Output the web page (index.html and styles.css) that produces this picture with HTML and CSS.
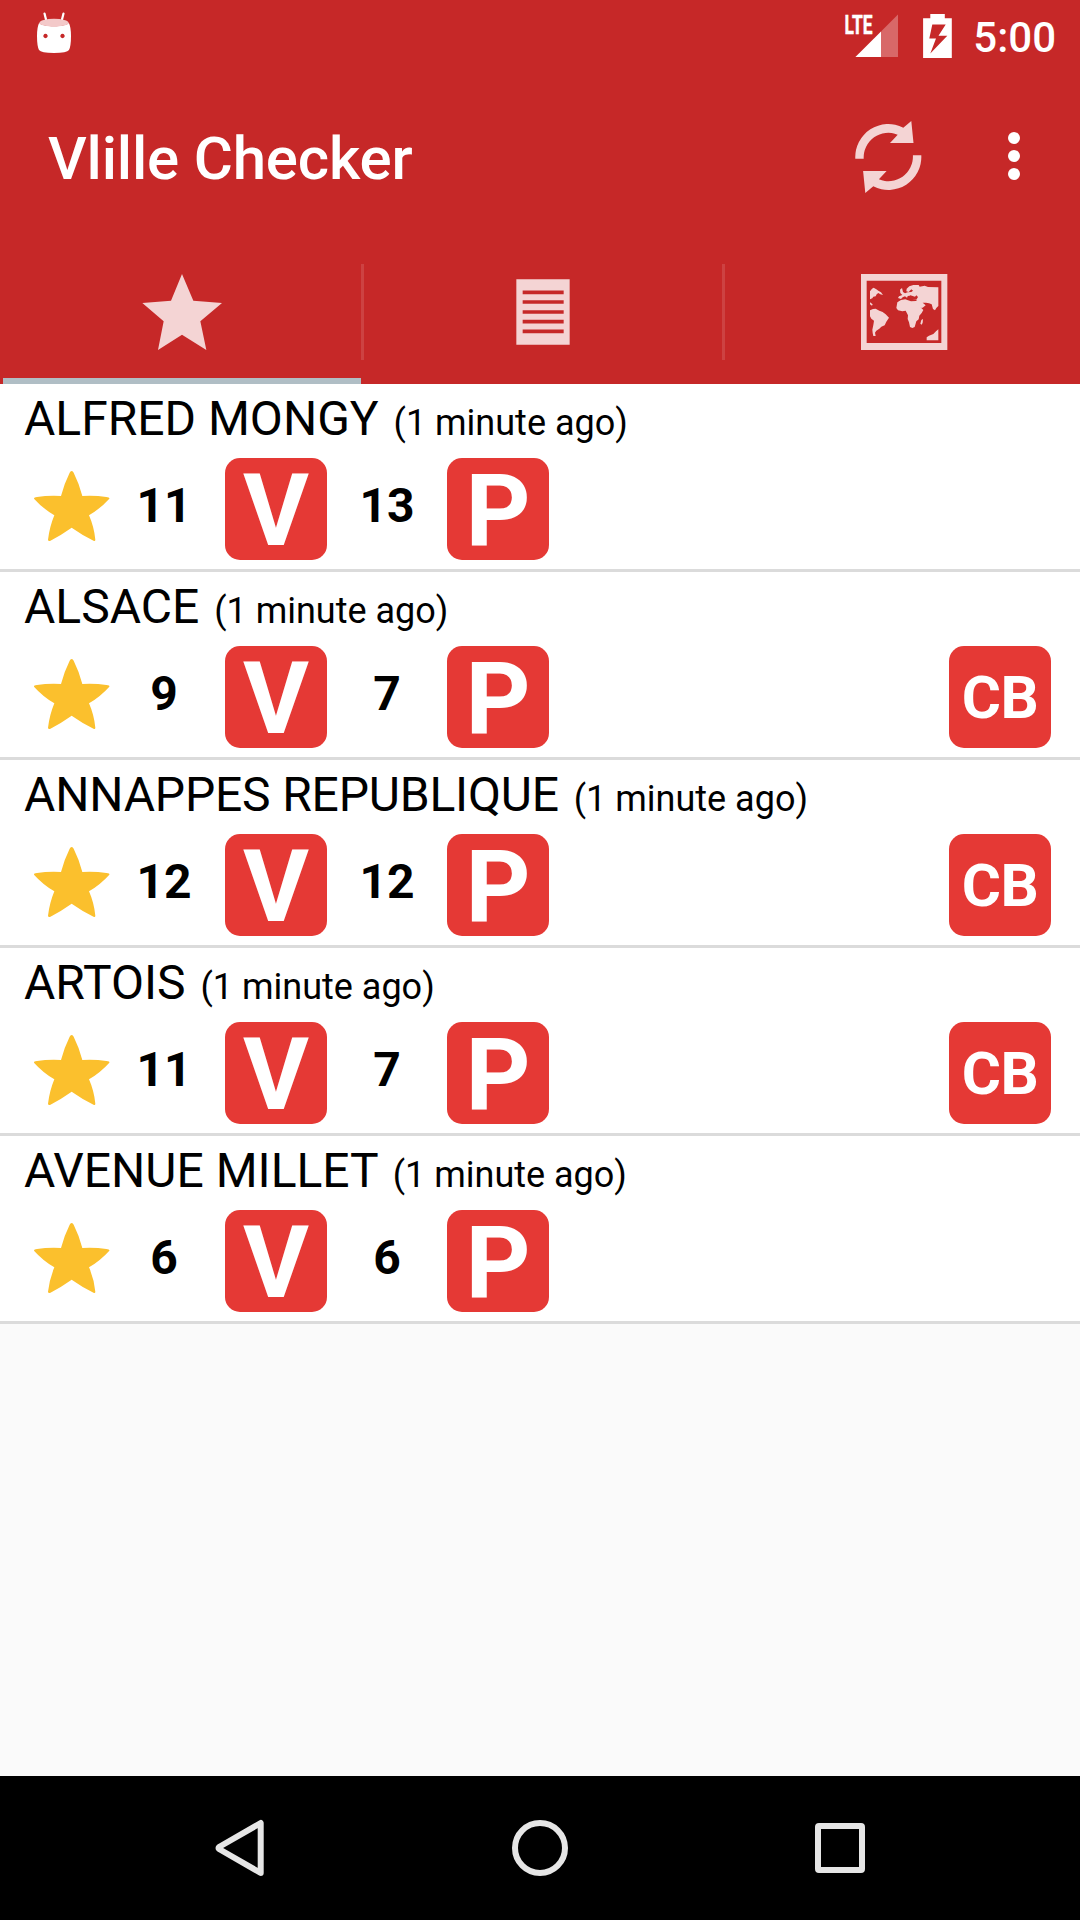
FILE: index.html
```html
<!DOCTYPE html>
<html lang="en">
<head>
<meta charset="utf-8">
<title>Vlille Checker</title>
<link rel="stylesheet" href="styles.css">
</head>
<body>
<svg class="defs" width="0" height="0">
  <symbol id="star" viewBox="99 270 234 216"><path d="M215 273Q219 273 221 278Q238 312 247 348Q286 346 319 351Q330 352 328 356Q302 385 267 406Q282 440 286 479Q286 484 282 483Q246 465 215 443Q184 465 150 483Q144 484 144 479Q149 440 163 406Q128 385 102 356Q101 352 111 351Q144 346 183 348Q192 312 209 278Q211 273 215 273Z"/></symbol>
</svg>
<header class="header">
  <div class="status">
    <svg class="robot" viewBox="36 12 36 42"><path d="M44.5 13.5l2 8M63.5 13.5l-2 8" stroke="#fff" stroke-width="2.2" stroke-linecap="round"/><path fill="#fff" fill-rule="evenodd" d="M39.3 22.5C40 27.500 68 27.500 68.700 22.500Q71 27 71 36Q71 46 69 50Q67 53 54 53Q41 53 39 50Q37 46 37 36Q37 27 39.300 22.500ZM45.500 33.800a2.200 2.200 0 1 0 .01 0ZM62.500 33.800a2.200 2.200 0 1 0 .01 0Z"/><ellipse cx="54" cy="22.700" rx="14.500" ry="3.900" fill="#f3c9c9"/></svg>
    <svg class="signal" viewBox="842 4 58 56"><path fill="#d86868" d="M881 31.500L898 14.500V57H881Z"/><path fill="#fff" d="M855.400 57L881 31.500V57Z"/><text x="844.500" y="33.500" textLength="28" lengthAdjust="spacingAndGlyphs">LTE</text></svg>
    <svg class="battery" viewBox="922 13 32 46"><path fill="#fff" fill-rule="evenodd" d="M930.300 14h14.500v4.300h7V58h-28.700V18.300h7.200ZM932.300 24.500L929.300 38.500H936L930.300 53.500L947.300 35.700H938.500L945.700 24.500Z"/></svg>
    <span class="clock">5:00</span>
  </div>
  <div class="toolbar">
    <h1 class="title">Vlille Checker</h1>
    <svg class="refresh" viewBox="854 119 70 76"><g id="arc"><path d="M855.300 158.700A33 33 0 0 1 903.300 127.700L911.300 121L913.500 143H890L897.700 134.700A24.600 24.600 0 0 0 863.700 158.700Z"/></g><use href="#arc" transform="rotate(180 888.300 157)"/></svg>
    <svg class="more" viewBox="0 0 12 48"><circle cx="6" cy="6" r="6"/><circle cx="6" cy="24" r="6"/><circle cx="6" cy="42" r="6"/></svg>
  </div>
  <nav class="tabs">
    <div class="tab active"><svg class="tab-star" viewBox="426 69 240 234"><path d="M546 72L580 152L666 159L601 214L619 300L546 254L474 300L491 214L427 159L513 152Z"/></svg></div>
    <div class="sep"></div>
    <div class="tab"><svg class="tab-list" viewBox="108 87 162 198"><path d="M109 88H269V284H109Z"/><path stroke="#c62828" stroke-width="11" d="M128 127H251M128 156H251M128 186H251M128 215H251M128 244H251"/></svg></div>
    <div class="sep"></div>
    <div class="tab"><svg class="tab-map" viewBox="60 69 264 234"><path fill-rule="evenodd" d="M63 72H322V300H63ZM80 92V279H304V92Z"/><path d="M90 124L96 116L101 113L109 118L115 122L123 127L129 135L121 133L115 129L110 133L107 139L100 140L97 145L90 148ZM90 157L98 163L96 167L90 163ZM90 181L99 177L107 176L118 182L128 186L137 193L147 203L139 215L134 226L124 230L118 236L109 242L105 248L107 258L100 258L98 249L97 239L100 225L102 212L94 206L90 199ZM172 157L183 150L196 148L204 151L213 154L228 153L233 160L241 171L250 180L245 189L238 197L236 208L229 214L224 231L217 234L210 231L207 217L203 207L204 196L197 182L187 184L174 181L169 174ZM177 139L187 135L181 129L180 119L186 114L189 126L195 130L203 127L214 126L219 122L214 118L206 126L199 124L200 116L208 109L220 105L236 105L239 110L254 107L264 111L295 112V168L289 174L285 181L279 177L275 163L267 160L258 158L248 158L257 166L248 173L240 174L233 167L228 160L230 151L219 148L213 140L204 137L201 143L195 139L188 142L183 147L174 144ZM244 210L249 207L248 218L245 224L241 221ZM295 238V271H260V262L267 257L280 252L288 244Z"/><path fill="#c62828" d="M202 141L211 136L225 140L229 136L234 141L229 149L216 149Z"/></svg></div>
  </nav>
</header>
<main class="list">
  <section class="row">
    <div class="name">ALFRED MONGY <small>(1 minute ago)</small></div>
    <div class="info"><svg class="star"><use href="#star"/></svg><b class="num">11</b><span class="tile">V</span><b class="num">13</b><span class="tile">P</span></div>
  </section>
  <section class="row">
    <div class="name">ALSACE <small>(1 minute ago)</small></div>
    <div class="info"><svg class="star"><use href="#star"/></svg><b class="num">9</b><span class="tile">V</span><b class="num">7</b><span class="tile">P</span><span class="tile card">CB</span></div>
  </section>
  <section class="row">
    <div class="name"><span class="long">ANNAPPES REPUBLIQUE</span> <small>(1 minute ago)</small></div>
    <div class="info"><svg class="star"><use href="#star"/></svg><b class="num">12</b><span class="tile">V</span><b class="num">12</b><span class="tile">P</span><span class="tile card">CB</span></div>
  </section>
  <section class="row">
    <div class="name">ARTOIS <small>(1 minute ago)</small></div>
    <div class="info"><svg class="star"><use href="#star"/></svg><b class="num">11</b><span class="tile">V</span><b class="num">7</b><span class="tile">P</span><span class="tile card">CB</span></div>
  </section>
  <section class="row">
    <div class="name">AVENUE MILLET <small>(1 minute ago)</small></div>
    <div class="info"><svg class="star"><use href="#star"/></svg><b class="num">6</b><span class="tile">V</span><b class="num">6</b><span class="tile">P</span></div>
  </section>
</main>
<footer class="navbar">
  <svg viewBox="0 0 60 60"><path d="M50.700 5V55L9 31Q8 30 9 29Z"/></svg>
  <svg viewBox="0 0 60 60"><circle cx="30" cy="30" r="25"/></svg>
  <svg viewBox="0 0 60 60"><rect x="8" y="8" width="44" height="44" rx="1"/></svg>
</footer>
</body>
</html>
```
FILE: styles.css
```css
* { box-sizing: border-box; }
body {
  margin: 0;
  width: 1080px;
  height: 1920px;
  display: flex;
  flex-direction: column;
  overflow: hidden;
  background: #fafafa;
  color: #000;
  font-family: Roboto, "Liberation Sans", sans-serif;
}
svg { display: block; flex: none; }
.defs { position: absolute; }

.header { background: #c62828; color: #fff; height: 384px; flex: none; }
.status { height: 72px; display: flex; align-items: flex-start; padding: 4px 24px 0 36px; }
.robot { width: 36px; height: 42px; fill: none; margin: 8px auto 0 0; }
.signal { width: 58px; height: 56px; }
.signal text { font: 700 26px Roboto, sans-serif; fill: #fff; stroke: #fff; stroke-width: .5; }
.battery { width: 32px; height: 46px; margin: 9px 19px 0 22px; }
.clock { font-size: 42px; font-weight: 500; line-height: 50px; margin-top: 9px; }

.toolbar { height: 168px; display: flex; align-items: center; padding: 0 60px 0 48px; }
.title { margin: 0 auto 0 0; font-size: 60px; font-weight: 500; line-height: 70px; padding-top: 5px; letter-spacing: -.18px; }
.refresh { width: 70px; height: 76px; fill: #f4d4d4; margin-right: 84px; margin-top: 2px; }
.more { width: 12px; height: 48px; fill: #fff; }

.tabs { height: 144px; display: flex; padding-left: 3px; overflow: hidden; }
.tab { width: 358px; flex: none; display: flex; justify-content: center; align-items: flex-start; fill: #f4d4d4; }
.tab.active { border-bottom: 6px solid #b0bec5; }
.sep { width: 3px; height: 96px; margin-top: 24px; background: #cd4242; flex: none; }
.tab-star { width: 80px; height: 78px; margin-top: 33px; }
.tab-list { width: 54px; height: 66px; margin-top: 39px; }
.tab-map { width: 88px; height: 78px; margin-top: 33px; }

.list { flex: 1; }
.row { height: 188px; background: #fff; border-bottom: 3px solid #dbdbdb; padding: 7px 29px 0 24px; }
.name { font-size: 48px; line-height: 56px; height: 67px; white-space: nowrap; }
.name small { font-size: 36px; margin-left: 3px; }
.long { letter-spacing: -.18px; }
.info { display: flex; height: 102px; }
.star { width: 78px; height: 72px; margin: 12px -7px 0 9px; fill: #fbc02d; }
.num { width: 120px; margin-top: 20px; text-align: center; font-size: 48px; line-height: 56px; }
.star + .num { margin-right: 1px; }
.tile {
  width: 102px;
  height: 102px;
  border-radius: 15px;
  background: #e53935;
  color: #fff;
  font-size: 101px;
  font-weight: 700;
  line-height: 105px;
  text-align: center;
  flex: none;
}
.card { margin-left: auto; font-size: 60px; line-height: 104px; letter-spacing: -.5px; }

.navbar { height: 144px; background: #000; display: flex; justify-content: center; align-items: center; gap: 240px; }
.navbar svg { width: 60px; height: 60px; fill: none; stroke: #e6e6e6; stroke-width: 6; stroke-linejoin: round; }
```
